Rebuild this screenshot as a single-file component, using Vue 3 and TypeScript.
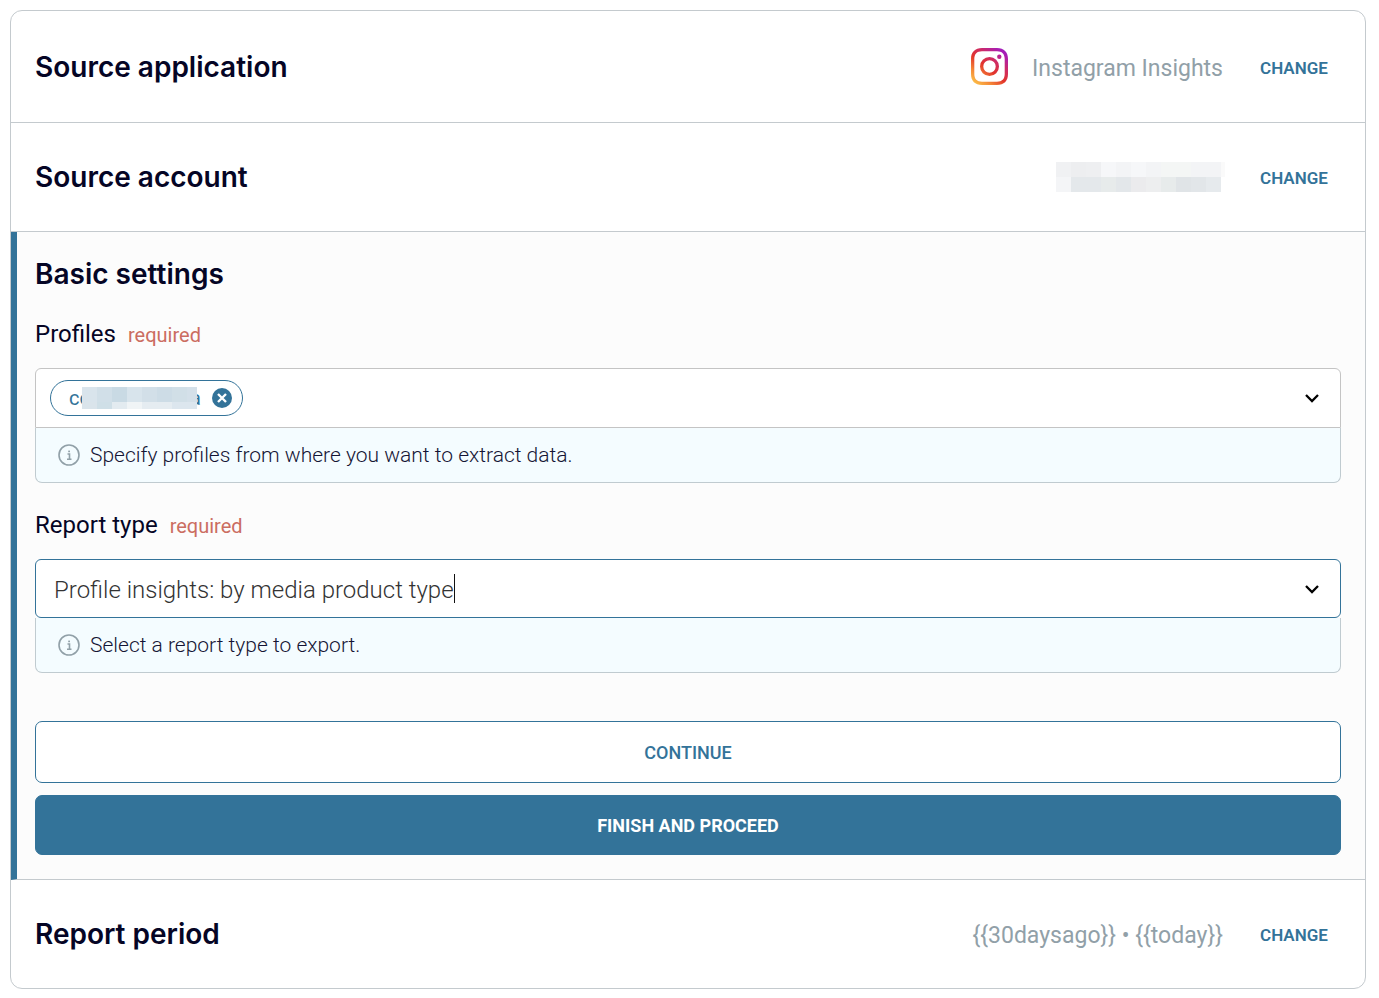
<script setup lang="ts">
import { ref } from 'vue'

const reportType = ref('Profile insights: by media product type')
const profileQuery = ref('')
const period = '{{30daysago}} • {{today}}'

const accountCells: string[] = [
  '#f0f1f3', '#edeef0', '#eeeff1', '#f6f7f9', '#f3f4f6', '#f6f7f9', '#f3f4f6', '#f4f6f5', '#f4f6f5', '#f3f4f6', '#f3f4f6', '#fafafa',
  '#f4f5f7', '#e4e8eb', '#e4e8eb', '#e7ebeb', '#e3e7ea', '#ebebed', '#edeeef', '#e7ebeb', '#e0e4e7', '#e2e6e9', '#e6eaed', '#ffffff',
]
const profileCells: string[] = [
  '#d9e4ec', '#d1dfe8', '#c9dae4', '#d8e4ec', '#d2dfe8', '#cddce6', '#d1dfe7', '#d4e0e9',
  '#dae4eb', '#cfdfe7', '#e3ebf0', '#f0f4f6', '#e5ecf1', '#e5ecf1', '#dce6ee', '#dce6ee',
]
</script>

<template>
  <main class="card">
    <section class="row row-first">
      <h2>Source application</h2>
      <div class="summary">
        <svg class="app-logo" viewBox="0 0 37 37" aria-hidden="true">
          <defs>
            <linearGradient id="ig" x1="0.1" y1="1" x2="0.9" y2="0">
              <stop offset="0" stop-color="#fcc54a" />
              <stop offset="0.22" stop-color="#f58a38" />
              <stop offset="0.45" stop-color="#e2342b" />
              <stop offset="0.65" stop-color="#d02c60" />
              <stop offset="0.9" stop-color="#a91db4" />
              <stop offset="1" stop-color="#9a20c0" />
            </linearGradient>
          </defs>
          <path
            fill="url(#ig)"
            fill-rule="evenodd"
            d="M11 0h15c7 0 11 4 11 11v15c0 7-4 11-11 11H11C4 37 0 33 0 26V11C0 4 4 0 11 0zm0 3.3c-5 0-7.700 2.700-7.700 7.700v15c0 5 2.700 7.700 7.700 7.700h15c5 0 7.700-2.700 7.700-7.700V11c0-5-2.700-7.700-7.700-7.700zM18.500 9a9.500 9.500 0 1 1 0 19a9.500 9.500 0 1 1 0-19zm0 3.300a6.200 6.200 0 1 0 0 12.400a6.200 6.200 0 1 0 0-12.400zM28.300 6.500a2.200 2.200 0 1 1 0 4.400a2.200 2.200 0 1 1 0-4.400z"
          />
        </svg>
        <span class="value">Instagram Insights</span>
        <button type="button" class="change">CHANGE</button>
      </div>
    </section>

    <section class="row">
      <h2>Source account</h2>
      <div class="summary">
        <span class="mosaic mosaic-account" aria-hidden="true">
          <i v-for="(c, i) in accountCells" :key="i" :style="{ background: c }"></i>
        </span>
        <button type="button" class="change">CHANGE</button>
      </div>
    </section>

    <section class="settings">
      <h2>Basic settings</h2>

      <div class="field">
        <div class="caption">
          <label for="profiles">Profiles</label>
          <span class="required">required</span>
        </div>
        <div class="control">
          <span class="chip">
            <span>co</span>
            <span class="mosaic mosaic-profile" aria-hidden="true">
              <i v-for="(c, i) in profileCells" :key="i" :style="{ background: c }"></i>
            </span>
            <span>a</span>
            <button type="button" class="remove" aria-label="Remove profile">
              <svg viewBox="0 0 20 20" aria-hidden="true">
                <circle cx="10" cy="10" r="10" />
                <path d="M6 6l8 8M14 6l-8 8" />
              </svg>
            </button>
          </span>
          <input id="profiles" v-model="profileQuery" class="query" type="text" role="combobox" aria-expanded="false" />
          <svg class="chevron" viewBox="0 0 16 10" aria-hidden="true"><path d="M2 2l6 6 6-6" /></svg>
        </div>
        <p class="hint">
          <svg class="info" viewBox="0 0 22 22" aria-hidden="true">
            <circle cx="11" cy="11" r="10" />
            <path d="M9.500 10h2v5M9 15.200h4.500" />
            <rect x="10.200" y="6.600" width="1.800" height="1.600" />
          </svg>
          Specify profiles from where you want to extract data.
        </p>
      </div>

      <div class="field">
        <div class="caption">
          <label for="report-type">Report type</label>
          <span class="required">required</span>
        </div>
        <div class="control control-active">
          <input id="report-type" v-model="reportType" class="typed" type="text" role="combobox" aria-expanded="false" />
          <span class="caret" aria-hidden="true"></span>
          <svg class="chevron" viewBox="0 0 16 10" aria-hidden="true"><path d="M2 2l6 6 6-6" /></svg>
        </div>
        <p class="hint">
          <svg class="info" viewBox="0 0 22 22" aria-hidden="true">
            <circle cx="11" cy="11" r="10" />
            <path d="M9.500 10h2v5M9 15.200h4.500" />
            <rect x="10.200" y="6.600" width="1.800" height="1.600" />
          </svg>
          Select a report type to export.
        </p>
      </div>

      <div class="actions">
        <button type="button" class="continue">CONTINUE</button>
        <button type="button" class="finish">FINISH AND PROCEED</button>
      </div>
    </section>

    <section class="row row-last">
      <h2>Report period</h2>
      <div class="summary">
        <span class="value">{{ period }}</span>
        <button type="button" class="change">CHANGE</button>
      </div>
    </section>
  </main>
</template>

<style>
body {
  margin: 0;
  background: #fff;
}
</style>

<style scoped>
* {
  box-sizing: border-box;
}
.card {
  margin: 10px 13px 9px 10px;
  border: 1px solid #c4cace;
  border-radius: 12px;
  background: #fff;
  color: #050525;
  font-family: Roboto, 'Liberation Sans', sans-serif;
  overflow: hidden;
}
h2 {
  margin: 0;
  font: 600 28px/34px Inter, 'Liberation Sans', sans-serif;
}
button,
input {
  font-family: inherit;
  margin: 0;
}
button {
  cursor: pointer;
}
.row {
  display: flex;
  align-items: center;
  justify-content: space-between;
  min-height: 109px;
  padding: 0 36px 0 24px;
  border-bottom: 1px solid #c4cace;
}
.row-first {
  min-height: 112px;
}
.row-last {
  min-height: 108px;
  border-bottom: 0;
}
.summary {
  display: flex;
  align-items: center;
}
.app-logo {
  width: 37px;
  height: 37px;
  margin-right: 24px;
}
.value {
  padding-top: 4px;
  color: #91a0a8;
  font-size: 23px;
  line-height: 30px;
}
.change {
  width: 70px;
  margin-left: 36px;
  padding: 2px 0 0;
  border: 0;
  background: none;
  color: #337399;
  font-size: 17px;
  font-weight: 600;
  line-height: 24px;
  white-space: nowrap;
}
.mosaic {
  display: grid;
}
.mosaic-account {
  grid-template-columns: repeat(11, 15px) 4px;
  grid-auto-rows: 15px;
  margin-right: -2px;
}
.mosaic-profile {
  position: relative;
  grid-template-columns: repeat(7, 15px) 10px;
  grid-template-rows: 15px 7px;
  margin: 0 -7px 0 -9px;
}
.settings {
  padding: 25px 24px 24px 18px;
  border-left: 6px solid #337399;
  border-bottom: 1px solid #c4cace;
  background: #fcfcfc;
}
.field {
  margin-top: 24px;
}
.caption {
  display: flex;
  align-items: baseline;
  gap: 12px;
  height: 39px;
  margin-bottom: 14px;
  font-size: 24px;
  line-height: 39px;
}
.field + .field {
  margin-top: 23px;
}
.required {
  color: #cb6d61;
  font-size: 20px;
}
.control {
  display: flex;
  align-items: center;
  height: 60px;
  border: 1px solid #c4c4c4;
  border-radius: 6px 6px 0 0;
  background: #fff;
  padding: 0 20px 0 14px;
}
.control-active {
  height: 59px;
  padding-left: 18px;
  border-color: #337399;
  border-radius: 6px;
}
.chip {
  display: flex;
  align-items: center;
  height: 36px;
  padding: 0 10px 0 18px;
  border: 1px solid #337399;
  border-radius: 18px;
  color: #337399;
  font-size: 20px;
}
.remove {
  width: 20px;
  height: 20px;
  margin-left: 11px;
  padding: 0;
  border: 0;
  background: none;
}
.remove svg {
  display: block;
  fill: #337399;
}
.remove path {
  fill: none;
  stroke: #fff;
  stroke-width: 2.4;
}
.query {
  flex: 1;
  min-width: 0;
  border: 0;
  outline: 0;
  background: none;
  font-size: 24px;
}
.typed {
  field-sizing: content;
  min-width: 0;
  padding: 3px 0 0;
  border: 0;
  outline: 0;
  background: none;
  color: #333;
  font-size: 24px;
  font-weight: 300;
  line-height: 30px;
}
.caret {
  width: 1px;
  height: 29px;
  background: #111;
}
.chevron {
  width: 16px;
  height: 10px;
  margin-left: auto;
  fill: none;
  stroke: #000;
  stroke-width: 2.3;
}
.hint {
  display: flex;
  align-items: center;
  gap: 10px;
  height: 55px;
  margin: 0;
  padding: 0 22px;
  border: 1px solid #c0cbd0;
  border-top: 0;
  border-radius: 0 0 7px 7px;
  background: #f4fcff;
  color: #151535;
  font-size: 21px;
  font-weight: 300;
  line-height: 26px;
}
.info {
  width: 22px;
  height: 22px;
  fill: none;
  stroke: #91a0a8;
  stroke-width: 1.6;
}
.info rect {
  fill: #91a0a8;
  stroke: none;
}
.actions {
  display: grid;
  gap: 12px;
  margin-top: 48px;
}
.continue,
.finish {
  height: 62px;
  padding: 0;
  border: 1px solid #337399;
  border-radius: 7px;
  background: #fff;
  color: #337399;
  font-size: 18px;
  font-weight: 500;
}
.finish {
  height: 60px;
  background: #337399;
  color: #fff;
  font-weight: 700;
}
</style>
